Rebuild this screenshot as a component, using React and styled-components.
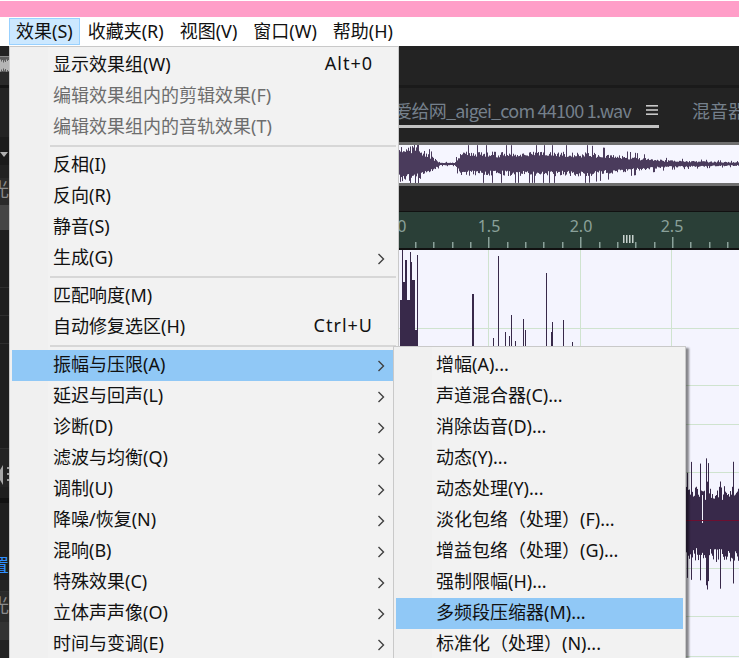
import React from "react";
import styled, { createGlobalStyle } from "styled-components";

const UI_FONT = `"Noto Sans", "Noto Sans CJK SC", sans-serif`;
const PANEL_FONT = `"Noto Sans CJK SC", "Noto Sans", sans-serif`;

const GlobalStyle = createGlobalStyle`
  html, body {
    margin: 0;
    padding: 0;
    background: #232323;
    overflow: hidden;
  }
`;

const Page = styled.div`
  position: relative;
  width: 739px;
  height: 658px;
  overflow: hidden;
  display: flex;
  flex-direction: column;
  font-family: ${UI_FONT};
  background: #fff;
`;

const TitleStrip = styled.div`
  height: 16px;
  margin-top: 1px;
  background: #ff9ec8;
  flex: none;
`;

const MenuBar = styled.div`
  height: 29px;
  flex: none;
  display: flex;
  align-items: stretch;
  gap: 2px;
  background: #fff;
  padding: 1px 0 1px 9px;
  box-sizing: border-box;
`;

const BarItem = styled.div`
  display: flex;
  align-items: center;
  padding: 0 6px 3px;
  margin-right: ${({ $active }) => ($active ? "-1px" : "0")};
  font-size: 18px;
  color: #111;
  white-space: nowrap;
  border: 1px solid ${({ $active }) => ($active ? "#99d1ff" : "transparent")};
  background: ${({ $active }) => ($active ? "#cce8ff" : "transparent")};
`;

const PrevItemEdge = styled.div`
  position: absolute;
  left: -6px;
  top: 18px;
  font-size: 18px;
  line-height: 25px;
  color: #111;
`;

const Desk = styled.div`
  flex: 1;
  min-height: 0;
  display: flex;
  background: #232323;
`;

const LeftStrip = styled.div`
  width: 9px;
  flex: none;
  display: flex;
  flex-direction: column;
  background: #1b1b1b;
  overflow: hidden;
`;

const StripBlock = styled.div`
  height: ${({ $h }) => $h}px;
  flex: none;
  background: ${({ $bg }) => $bg || "#1e1e1e"};
  border-bottom: ${({ $line }) => ($line ? "1px solid #2e2e2e" : "none")};
  color: ${({ $fg }) => $fg || "#8a8a8a"};
  font-size: 18px;
  line-height: ${({ $h }) => $h - 4}px;
  white-space: nowrap;
  box-sizing: border-box;
  direction: rtl;
  overflow: hidden;
`;

const Editor = styled.div`
  flex: 1;
  min-width: 0;
  margin-left: 389px;
  display: flex;
  flex-direction: column;
  overflow: hidden;
`;

const TopPad = styled.div`
  height: 39px;
  flex: none;
  background: #232323;
  border-bottom: 3px solid #1a1a1a;
`;

const TabRow = styled.div`
  height: 54px;
  flex: none;
  display: flex;
  align-items: flex-start;
  background: #232323;
`;

const FileTab = styled.div`
  width: 261px;
  height: 40px;
  flex: none;
  display: flex;
  justify-content: flex-end;
  align-items: center;
  gap: 15px;
  box-sizing: border-box;
  padding: 6px 1px 0 0;
  border-bottom: 3px solid #c3c3c3;
  color: #75808c;
  font-family: ${PANEL_FONT};
  font-size: 18px;
  line-height: 24px;
  letter-spacing: -0.8px;
  white-space: nowrap;
  overflow: hidden;
`;

const TabMenuIcon = styled.svg`
  flex: none;
`;

const OtherTab = styled.div`
  margin-left: 33px;
  height: 40px;
  display: flex;
  align-items: center;
  padding-top: 6px;
  padding-bottom: 3px;
  box-sizing: border-box;
  color: #75808c;
  font-family: ${PANEL_FONT};
  font-size: 18px;
  white-space: nowrap;
`;

const Overview = styled.div`
  height: 44px;
  flex: none;
  box-sizing: border-box;
  background: #f6f6ff;
  border-top: 3px solid #6f6f6f;
  border-bottom: 3px solid #6f6f6f;
  line-height: 0;
`;

const Spacer = styled.div`
  height: 25px;
  flex: none;
  background: #232323;
`;

const Ruler = styled.div`
  height: 39px;
  flex: none;
  box-sizing: border-box;
  background: #2a3f37;
  border-top: 1px solid #111;
  border-bottom: 2px solid #111;
  line-height: 0;
`;

const WavePanel = styled.div`
  flex: 1;
  min-height: 0;
  background: #f4f4fe;
  line-height: 0;
`;

const Menu = styled.div`
  position: absolute;
  left: ${({ $x }) => $x}px;
  top: ${({ $y }) => $y}px;
  width: ${({ $w }) => $w}px;
  box-sizing: border-box;
  padding: 3px 2px 0;
  background: linear-gradient(90deg, #f0f0f0 ${({ $gutter }) => $gutter}px, #f2f2f2 ${({ $gutter }) => $gutter}px);
  border: 1px solid #c9c9c9;
  border-bottom: none;
  box-shadow: ${({ $shadow }) => ($shadow ? "3px 2px 2px rgba(0, 0, 0, 0.45)" : "none")};
`;

const Row = styled.div`
  height: 31px;
  display: flex;
  align-items: center;
  box-sizing: border-box;
  padding: 0 11px 6px ${({ $indent }) => $indent}px;
  font-size: 18px;
  white-space: nowrap;
  color: ${({ $off }) => ($off ? "#6d6d6d" : "#111")};
  background: ${({ $on }) => ($on ? "#90c8f6" : "transparent")};
`;

const Label = styled.span`
  flex: 1;
`;

const Keys = styled.span`
  margin-right: 12px;
  letter-spacing: 1px;
`;

const ChevronBox = styled.svg`
  margin-top: 6px;
`;

const Sep = styled.div`
  height: 2px;
  margin: 2px 0 3px ${({ $indent }) => $indent}px;
  background: #d7d7d7;
`;

const Chevron = () => (
  <ChevronBox width="8" height="12" viewBox="0 0 8 12" fill="none">
    <path d="M1.5 1l5 5-5 5" stroke="#404040" strokeWidth="1.4" />
  </ChevronBox>
);

function seeded(seed) {
  let s = seed;
  return () => {
    s = (s * 16807) % 2147483647;
    return (s - 1) / 2147483646;
  };
}

const overviewEnv = (x) => {
  if (x < 20) return 19;
  if (x < 42) return 19 - ((x - 20) / 22) * 17.5;
  if (x < 56) return 1.5;
  if (x < 62) return 1.5 + ((x - 56) / 6) * 10;
  if (x < 190) return 13;
  if (x < 270) return 13 - ((x - 190) / 80) * 9;
  return Math.max(2, 4 - ((x - 270) / 70) * 2);
};

function OverviewWave() {
  const rnd = seeded(4711);
  const bars = [];
  for (let x = 0; x < 341; x += 1) {
    const e = overviewEnv(x);
    const spike = rnd() > 0.9 ? 1.45 : 0.5 + rnd() * 0.45;
    const spikeDn = rnd() > 0.9 ? 1.45 : 0.5 + rnd() * 0.45;
    const up = Math.min(19, Math.max(1, e * spike));
    const dn = Math.min(19, Math.max(1, e * spikeDn));
    bars.push(<rect key={x} x={x} y={19 - up} width="1" height={up + dn} fill="#4a3b5c" />);
  }
  return (
    <svg width="341" height="38" viewBox="0 0 341 38">
      {bars}
    </svg>
  );
}

const rulerTicks = Array.from({ length: 19 }, (_, i) => i);

function RulerScale() {
  return (
    <svg width="341" height="36" viewBox="0 0 341 36">
      {rulerTicks.map((i) => {
        const x = 17 + i * 18.35;
        const major = i % 5 === 4;
        return <rect key={i} x={Math.round(x)} y={major ? 25 : 30} width="1.5" height={major ? 11 : 6} fill="#8aa19a" />;
      })}
      {[0, 1, 2, 3].map((i) => (
        <rect key={i} x={225 + i * 3} y="23" width="1.5" height="8" fill="#c8d2ce" />
      ))}
      {[[-3, "1.0"], [91, "1.5"], [183, "2.0"], [274, "2.5"]].map(([x, t]) => (
        <text key={t} x={x} y="20" textAnchor="middle" fontSize="16" fontFamily={UI_FONT} fill="#8aa19a">
          {t}
        </text>
      ))}
    </svg>
  );
}

// 开头的密集段，[x, 顶部 y]
const headBars = [
  [2, 50], [3, 50], [4, 0], [5, 32], [6, 32], [7, 10], [8, 10], [9, 50], [10, 50], [11, 50],
  [12, 2], [13, 12], [14, 30], [15, 30], [16, 30], [17, 80], [18, 80], [19, 5]
];

const spikes = [
  [74, 44], [75, 44], [100, 6], [95, 88], [107, 82], [111, 86], [113, 65], [117, 91],
  [125, 69], [127, 80], [148, 23], [153, 82], [154, 72], [165, 70], [174, 92]
];

const gridX = [90, 182, 273];
const gridY = [78, 135, 174, 222, 270, 318, 366, 406];

function MainWave() {
  const rnd = seeded(90210);
  const body = [];
  for (let x = 287; x < 341; x += 1) {
    const big = rnd() > 0.88;
    const up = big ? 38 + rnd() * 24 : 20 + rnd() * 14;
    const dn = big ? 50 + rnd() * 24 : 28 + rnd() * 14;
    body.push(<rect key={x} x={x} y={270 - up} width="1" height={up + dn} fill="#38294a" />);
  }
  return (
    <svg width="341" height="408" viewBox="0 0 341 408">
      {gridX.map((x) => (
        <rect key={x} x={x} y="0" width="1" height="408" fill="#cfe3cf" />
      ))}
      {gridY.map((y) => (
        <rect key={y} x="0" y={y} width="341" height="1" fill="#cfe3cf" />
      ))}
      {headBars.map(([x, y]) => (
        <rect key={x} x={x} y={y} width="1" height={408 - y} fill="#38294a" />
      ))}
      {body}
      {spikes.map(([x, y]) => (
        <rect key={x} x={x} y={y} width="1" height={408 - y} fill="#38294a" />
      ))}
      <rect x="304" y="245" width="1" height="28" fill="#f4f4fe" />
      <rect x="287" y="270" width="54" height="1" fill="#6d0f30" />
    </svg>
  );
}

const StripMeter = () => (
  <svg width="9" height="15" viewBox="0 0 9 15">
    {[9, 5, 8, 3, 7, 4, 9, 6, 8].map((h, i) => (
      <rect key={i} x={i} y={7 - h / 2} width="1" height={h + 3} fill="#b5b5b5" />
    ))}
  </svg>
);

const StripTriangle = () => (
  <svg width="9" height="28" viewBox="0 0 9 28">
    <path d="M0 15h8l-4 5z" fill="#b0b0b0" />
  </svg>
);

const StripSpeaker = () => (
  <svg width="9" height="24" viewBox="0 0 9 24">
    <path d="M0 7l3-5v20l-3-5z" fill="#a8a8a8" />
    <rect x="7" y="4" width="2" height="2" fill="#9a9a9a" />
    <rect x="7" y="10" width="2" height="2" fill="#9a9a9a" />
    <rect x="7" y="16" width="2" height="2" fill="#9a9a9a" />
  </svg>
);

const leftBlocks = [
  { h: 10, bg: "#232323" },
  { h: 1, bg: "#8a8a8a" },
  { h: 15, bg: "#5c5c5c", icon: <StripMeter /> },
  { h: 13, bg: "#2a2a2a" },
  { h: 3, bg: "#141414" },
  { h: 49, bg: "#232323" },
  { h: 28, bg: "#1b1b1b", icon: <StripTriangle /> },
  { h: 13, bg: "#222" },
  { h: 27, bg: "#2a2a2a", text: "光" },
  { h: 25, bg: "#454545" },
  { h: 58, line: true },
  { h: 28, line: true },
  { h: 28, line: true },
  { h: 105, line: true },
  { h: 14, bg: "#232323" },
  { h: 24, bg: "#232323", icon: <StripSpeaker /> },
  { h: 11 },
  { h: 5, bg: "#111" },
  { h: 52 },
  { h: 25, text: "置", fg: "#2f8fff" },
  { h: 12, bg: "#232323", line: true },
  { h: 30, bg: "#2a2a2a", text: "光" },
  { h: 18, bg: "#333" },
  { h: 18, bg: "#222" }
];

const mainItems = [
  { t: "显示效果组(W)", keys: "Alt+0" },
  { t: "编辑效果组内的剪辑效果(F)", off: true },
  { t: "编辑效果组内的音轨效果(T)", off: true },
  { sep: true },
  { t: "反相(I)" },
  { t: "反向(R)" },
  { t: "静音(S)" },
  { t: "生成(G)", sub: true },
  { sep: true },
  { t: "匹配响度(M)" },
  { t: "自动修复选区(H)", keys: "Ctrl+U" },
  { sep: true },
  { t: "振幅与压限(A)", sub: true, on: true },
  { t: "延迟与回声(L)", sub: true },
  { t: "诊断(D)", sub: true },
  { t: "滤波与均衡(Q)", sub: true },
  { t: "调制(U)", sub: true },
  { t: "降噪/恢复(N)", sub: true },
  { t: "混响(B)", sub: true },
  { t: "特殊效果(C)", sub: true },
  { t: "立体声声像(O)", sub: true },
  { t: "时间与变调(E)", sub: true }
];

const ampItems = [
  { t: "增幅(A)..." },
  { t: "声道混合器(C)..." },
  { t: "消除齿音(D)..." },
  { t: "动态(Y)..." },
  { t: "动态处理(Y)..." },
  { t: "淡化包络（处理）(F)..." },
  { t: "增益包络（处理）(G)..." },
  { t: "强制限幅(H)..." },
  { t: "多频段压缩器(M)...", on: true },
  { t: "标准化（处理）(N)..." }
];

function MenuList({ items, indent, sepIndent }) {
  return items.map((item, i) =>
    item.sep ? (
      <Sep key={i} $indent={sepIndent} />
    ) : (
      <Row key={i} $indent={indent} $off={item.off} $on={item.on}>
        <Label>{item.t}</Label>
        {item.keys && <Keys>{item.keys}</Keys>}
        {item.sub && <Chevron />}
      </Row>
    )
  );
}

export default function App() {
  return (
    <Page>
      <GlobalStyle />
      <TitleStrip />
      <MenuBar>
        <BarItem $active>效果(S)</BarItem>
        <BarItem>收藏夹(R)</BarItem>
        <BarItem>视图(V)</BarItem>
        <BarItem>窗口(W)</BarItem>
        <BarItem>帮助(H)</BarItem>
      </MenuBar>
      <PrevItemEdge>)</PrevItemEdge>
      <Desk>
        <LeftStrip>
          {leftBlocks.map((b, i) => (
            <StripBlock key={i} $h={b.h} $bg={b.bg} $fg={b.fg} $line={b.line}>
              {b.text || b.icon}
            </StripBlock>
          ))}
        </LeftStrip>
        <Editor>
          <TopPad />
          <TabRow>
            <FileTab>
              <span>爱给网_aigei_com 44100 1.wav</span>
              <TabMenuIcon width="12" height="12" viewBox="0 0 12 12" fill="#c8c8c8">
                <rect x="0" y="1" width="12" height="1.6" />
                <rect x="0" y="5.2" width="12" height="1.6" />
                <rect x="0" y="9.4" width="12" height="1.6" />
              </TabMenuIcon>
            </FileTab>
            <OtherTab>混音器</OtherTab>
          </TabRow>
          <Overview>
            <OverviewWave />
          </Overview>
          <Spacer />
          <Ruler>
            <RulerScale />
          </Ruler>
          <WavePanel>
            <MainWave />
          </WavePanel>
        </Editor>
      </Desk>
      <Menu $x={9} $y={46} $w={390} $gutter={38}>
        <MenuList items={mainItems} indent={41} sepIndent={38} />
      </Menu>
      <Menu $x={393} $y={346} $w={293} $gutter={38} $shadow>
        <MenuList items={ampItems} indent={40} sepIndent={38} />
      </Menu>
    </Page>
  );
}
